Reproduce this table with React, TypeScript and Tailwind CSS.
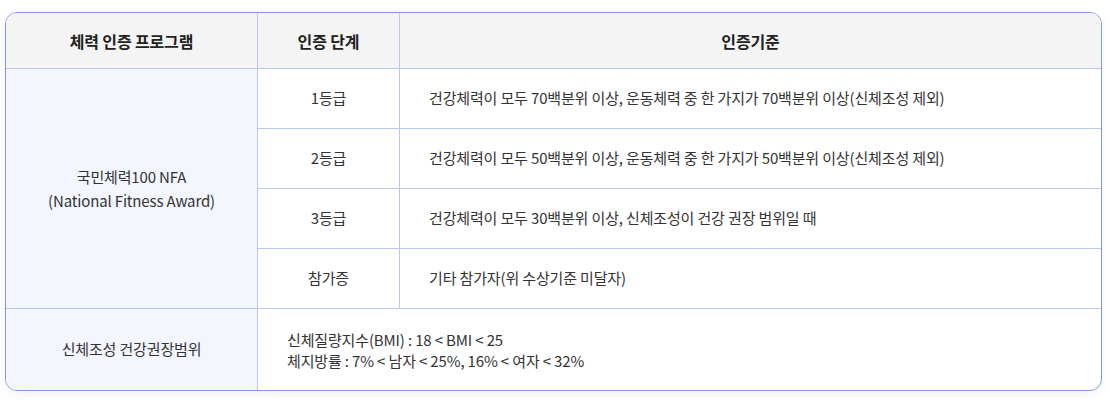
import React from "react";

const font = { fontFamily: '"Noto Sans CJK KR", "Noto Sans", sans-serif' };

export default function App() {
  const rows = [
    ["1등급", "건강체력이 모두 70백분위 이상, 운동체력 중 한 가지가 70백분위 이상(신체조성 제외)"],
    ["2등급", "건강체력이 모두 50백분위 이상, 운동체력 중 한 가지가 50백분위 이상(신체조성 제외)"],
    ["3등급", "건강체력이 모두 30백분위 이상, 신체조성이 건강 권장 범위일 때"],
    ["참가증", "기타 참가자(위 수상기준 미달자)"],
  ];
  return (
    <div className="w-[1120px] h-[411px] bg-white pt-[12px] pl-[5px]" style={font}>
      <div className="w-[1097px] border border-[#8597dc] rounded-[12px] overflow-hidden bg-white shadow-[0_2px_10px_rgba(60,80,150,0.08)] text-[#333] tracking-[-0.15px]">
        <div className="grid grid-cols-[252px_142px_1fr] grid-rows-[56px_60px_60px_60px_60px_81px]">
          <div className="bg-[#f4f4f4] border-r border-b border-[#bcc7ee] flex items-center justify-center text-[16px] font-bold text-[#222]">체력 인증 프로그램</div>
          <div className="bg-[#f4f4f4] border-r border-b border-[#bcc7ee] flex items-center justify-center text-[16px] font-bold text-[#222]">인증 단계</div>
          <div className="bg-[#f4f4f4] border-b border-[#bcc7ee] flex items-center justify-center text-[16px] font-bold text-[#222]">인증기준</div>
          <div className="row-span-4 bg-[#f3f6fd] border-r border-b border-[#bcc7ee] flex flex-col items-center justify-center text-[15px] leading-[24px]">
            <span>국민체력100 NFA</span>
            <span>(National Fitness Award)</span>
          </div>
          {rows.map(([a, b]) => (
            <React.Fragment key={a}>
              <div className="border-r border-b border-[#bcc7ee] flex items-center justify-center text-[15px]">{a}</div>
              <div className="border-b border-[#bcc7ee] flex items-center pl-[29px] text-[15px]">{b}</div>
            </React.Fragment>
          ))}
          <div className="bg-[#f3f6fd] border-r border-[#bcc7ee] flex items-center justify-center text-[15px]">신체조성 건강권장범위</div>
          <div className="col-span-2 flex flex-col justify-center pl-[29px] text-[15px] leading-[21px]">
            <span>신체질량지수(BMI) : 18 &lt; BMI &lt; 25</span>
            <span>체지방률 : 7% &lt; 남자 &lt; 25%, 16% &lt; 여자 &lt; 32%</span>
          </div>
        </div>
      </div>
    </div>
  );
}
